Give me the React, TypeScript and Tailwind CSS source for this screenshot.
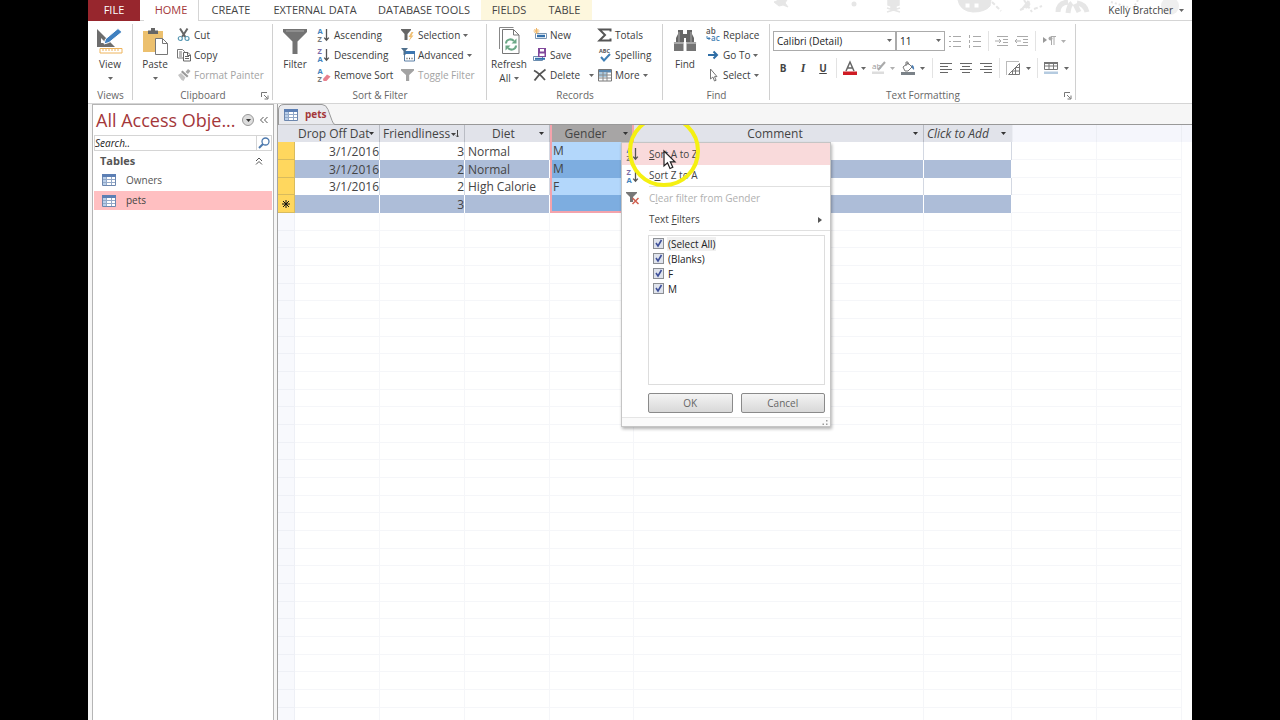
import React from "react";

type Kids = { children?: React.ReactNode };

function Caret({ faded = false, dark = false }: { faded?: boolean; dark?: boolean }) {
  const tone = faded ? "text-[#b0b0b0]" : dark ? "text-[#333]" : "text-[#666]";
  return (
    <svg viewBox="0 0 5 3" className={`h-[3px] w-[5px] shrink-0 ${tone}`}>
      <path d="M0 0h5L2.500 3z" fill="currentColor" />
    </svg>
  );
}

function Icon({ children, size = "sm" }: Kids & { size?: "sm" | "lg" }) {
  return size === "sm" ? (
    <svg viewBox="0 0 14 14" className="h-[14px] w-[14px] shrink-0 overflow-visible" fill="none">
      {children}
    </svg>
  ) : (
    <svg viewBox="0 0 28 28" className="h-7 w-7 shrink-0" fill="none">
      {children}
    </svg>
  );
}

function SortLetters({ top, bottom, eraser = false }: { top: string; bottom: string; eraser?: boolean }) {
  return (
    <Icon>
      <text x="0.500" y="6" fontSize="7.500" fontFamily="Open Sans, sans-serif" fontWeight="700" fill={top === "A" ? "#3f84bd" : "#7b6aa8"}>{top}</text>
      <text x="0.500" y="14" fontSize="7.500" fontFamily="Open Sans, sans-serif" fontWeight="700" fill={bottom === "A" ? "#3f84bd" : "#777"}>{bottom}</text>
      {eraser ? (
        <path d="M6 11l4-4.500 3.500 2-4 4.500H6.500z" fill="#e8808e" />
      ) : (
        <path d="M9.500 1v11M7.200 9.600l2.300 2.600 2.300-2.600" stroke="#555" strokeWidth="1.300" />
      )}
    </Icon>
  );
}

const icons = {
  cut: (
    <Icon>
      <path d="M3 0.500l5.400 8.500M10.500 0.500L5 9" stroke="#666" strokeWidth="2" />
      <circle cx="3.300" cy="10.500" r="2" stroke="#5b9bb5" strokeWidth="1.200" />
      <circle cx="10" cy="10.500" r="2" stroke="#5b9bb5" strokeWidth="1.200" />
    </Icon>
  ),
  copy: (
    <Icon>
      <path d="M.5 1.500h5l2 2v6.500h-7z" fill="#fff" stroke="#777" />
      <path d="M2 4h3M2 6h3M2 8h3" stroke="#777" />
      <path d="M6.500 4.500h4.500l2.500 2.500v6h-7z" fill="#fff" stroke="#666" />
      <path d="M8 8.500h4M8 10.500h4M10.500 4.500v3h3" stroke="#666" />
    </Icon>
  ),
  painter: (
    <Icon>
      <path d="M8.500 4L11 1l2.500 2-2.500 3z" fill="#a8a8a8" />
      <path d="M5.500 2.500l6 5.500-1.500 1.500-6-5.500z" fill="#999" />
      <path d="M1 7l3-2 4.500 4.500-2 3.500-2-1z" fill="#c4c4c4" />
    </Icon>
  ),
  selection: (
    <Icon>
      <path d="M0 1h10v1L6.500 6v6h-3V6L0 2z" fill="#666" />
      <path d="M10.500 4L7.500 9h2l-2 4.500 5-6h-2l2-3.500z" fill="#f0bf72" />
    </Icon>
  ),
  advanced: (
    <Icon>
      <path d="M3.500 3.500h10v9.500h-10z" fill="#fff" stroke="#5a7fa5" />
      <path d="M3 3h11v3H3z" fill="#3c76b0" />
      <path d="M5.500 10.500h6" stroke="#555" strokeDasharray="1 1.500" strokeWidth="1.500" />
      <path d="M0 0h7L4.500 3v4h-2V3z" fill="#50708c" />
    </Icon>
  ),
  toggle: (
    <Icon>
      <path d="M0 1h13v1.500L8.200 7v6H5V7L0 2.500z" fill="#a3a3a3" />
    </Icon>
  ),
  fresh: (
    <Icon>
      <path d="M2.500 5.500h11v5h-11z" fill="#fff" stroke="#7a95b0" />
      <path d="M4 8h8" stroke="#3270ad" strokeWidth="2.500" />
      <path d="M3.500 0v6M.5 3h6M1.400 1l4 4M5.400 1l-4 4" stroke="#efb76a" />
    </Icon>
  ),
  save: (
    <Icon>
      <path d="M.5 8.500h9v4h-9z" fill="#fff" stroke="#6c8eb0" />
      <path d="M2 10.800h10" stroke="#3270ad" strokeWidth="2" />
      <path d="M5 0h8v9H5z" fill="#80479b" />
      <path d="M7 1h4v2.500H7zM6.500 5.500h5V8h-5z" fill="#fff" />
    </Icon>
  ),
  del: (
    <Icon>
      <path d="M1 2.500c4 2 8 6 11 9.500M12.500 1.500C8 4.500 4.500 8 1.500 12.500" stroke="#555" strokeWidth="1.800" />
    </Icon>
  ),
  totals: (
    <Icon>
      <path d="M12.500 3.500V1.500H1.500L7 7l-5.500 5.500h11v-2" stroke="#555" strokeWidth="2" />
    </Icon>
  ),
  spelling: (
    <Icon>
      <text x="1" y="5" fontSize="5.500" fontFamily="Open Sans, sans-serif" fontWeight="700" fill="#555">ABC</text>
      <path d="M3 9l3 3.500L12 6" stroke="#3f7fb5" strokeWidth="2" />
    </Icon>
  ),
  more: (
    <Icon>
      <path d="M.5 1.500h13v11.500H.5z" fill="#fff" stroke="#777" />
      <path d="M1 2h12v2.500H1z" fill="#5a88b0" />
      <path d="M1 5h8v4H1z" fill="#a9cce4" />
      <path d="M1 7h12M1 10h12M5 4v9M9 4v9" stroke="#888" />
    </Icon>
  ),
  replace: (
    <Icon>
      <text x="0" y="6" fontSize="8" fontFamily="Open Sans, sans-serif" fontWeight="600" fill="#555">ab</text>
      <text x="5" y="13" fontSize="8" fontFamily="Open Sans, sans-serif" fontWeight="600" fill="#3f7fb5">ac</text>
      <path d="M1 8v2.500h3M2.500 9l1.500 1.500L2.500 12" stroke="#3f7fb5" />
    </Icon>
  ),
  goto: (
    <Icon>
      <path d="M2 7h9M7.500 3.500L11 7l-3.500 3.500" stroke="#2f6ea6" strokeWidth="2" />
    </Icon>
  ),
  pick: (
    <Icon>
      <path d="M4.500 1v10l2.400-2 1.600 4 1.600-.700-1.600-3.700H11z" fill="#fff" stroke="#777" />
    </Icon>
  ),
};

function Small({ icon, children, caret = false, faded = false, gap = false }: Kids & { icon: React.ReactNode; caret?: boolean; faded?: boolean; gap?: boolean }) {
  return (
    <button type="button" className={`flex h-5 items-center gap-[3px] whitespace-nowrap ${faded ? "text-[#a3a3a3]" : "text-[#3c3c3c]"}`}>
      {icon}
      <span>{children}</span>
      {caret && <span className={gap ? "pl-[6px]" : ""}><Caret /></span>}
    </button>
  );
}

function Big({ icon, label, second, caret = false }: { icon: React.ReactNode; label: string; second?: string; caret?: boolean }) {
  return (
    <button type="button" className="flex w-9 shrink-0 flex-col items-center pt-[2px] text-[#3c3c3c]">
      {icon}
      <span className="mt-[2px] h-[14px] leading-[14px]">{label}</span>
      <span className="flex h-[14px] items-center gap-[3px] leading-[14px]">
        {second}
        {caret && <Caret />}
      </span>
    </button>
  );
}

function Launcher() {
  return (
    <button type="button" aria-label="More options" className="absolute right-1 top-1 h-2 w-2">
      <svg viewBox="0 0 8 8" className="h-2 w-2" fill="none" stroke="#777">
        <path d="M.5 5V.5H6M3 3l3.500 3.500M7 3.500V7H3.500" />
      </svg>
    </button>
  );
}

function Group({ label, width, launcher = false, children }: Kids & { label: string; width: string; launcher?: boolean }) {
  return (
    <section aria-label={label} className={`relative flex shrink-0 flex-col pt-1 ${width}`}>
      <div className="flex h-[62px] items-start">{children}</div>
      <div className="relative mt-px h-[14px] text-center leading-[14px] text-[#666]">
        {label}
        {launcher && <Launcher />}
      </div>
      <span className="absolute right-0 top-[3px] h-[76px] w-px bg-[#d0d0d0]" />
    </section>
  );
}

function Lines({ kind }: { kind: "left" | "center" | "right" | "bullets" | "numbers" | "indent" | "outdent" }) {
  const paths = {
    left: "M1 2.500h12M1 5.500h8M1 8.500h12M1 11.500h8",
    center: "M1 2.500h12M3 5.500h8M1 8.500h12M3 11.500h8",
    right: "M1 2.500h12M5 5.500h8M1 8.500h12M5 11.500h8",
    bullets: "M5 2.500h8M5 7.500h8M5 12.500h8M1 2.500h2M1 7.500h2M1 12.500h2",
    numbers: "M5 2.500h8M5 7.500h8M5 12.500h8M1.500 1v3M1.500 6v3M1.500 11v3",
    indent: "M2 2.500h11M8 5.500h5M8 8.500h5M2 11.500h11M0 7h6M4 5l2 2-2 2",
    outdent: "M2 2.500h11M8 5.500h5M8 8.500h5M2 11.500h11M6 7H0M2 5L0 7l2 2",
  };
  const dark = kind === "left" || kind === "center" || kind === "right";
  return (
    <button type="button" aria-label={kind} className="flex h-5 w-5 items-center justify-center">
      <Icon>
        <path d={paths[kind]} stroke={dark ? "#666" : "#aaa"} />
      </Icon>
    </button>
  );
}

function Divider() {
  return <span className="mx-[3px] h-5 w-px bg-[#e3e3e3]" />;
}

function Combo({ label, value, width }: { label: string; value: string; width: string }) {
  return (
    <div className={`relative ${width}`}>
      <select aria-label={label} className="h-5 w-full appearance-none border border-[#ababab] bg-white pl-[3px] leading-[18px] text-[#222]">
        <option>{value}</option>
      </select>
      <span className="pointer-events-none absolute right-1 top-2"><Caret /></span>
    </div>
  );
}

function TableIcon() {
  return (
    <svg viewBox="0 0 14 12" className="h-3 w-[14px] shrink-0" fill="none">
      <path d="M.5.5h13v11H.5z" fill="#fff" stroke="#6d87ae" />
      <path d="M0 0h14v3H0z" fill="#5c7fb4" />
      <path d="M1 3h3v8H1z" fill="#b9cfea" />
      <path d="M1 5.500h12M1 8.500h12M4.500 3v8M9.500 3v8" stroke="#93a9c8" />
    </svg>
  );
}

function Ribbon() {
  return (
    <div className="flex h-[83px] shrink-0 overflow-hidden border-b border-[#d5d5d5] bg-white">
      <Group label="Views" width="w-[45px]">
        <div className="pl-1">
          <Big
            label="View"
            caret
            icon={
              <Icon size="lg">
                <path d="M1 2v18h18z" fill="#6d6d6d" />
                <path d="M5 11v5h5z" fill="#fff" />
                <path d="M8 17l1.500-5L22 1.500l4 3.500L13 15.500z" fill="#3f80c0" stroke="#fff" />
                <path d="M4 21.500h22v4.500H4z" fill="#fff" stroke="#eeb45c" />
                <path d="M7 22v2M10 22v2M13 22v2M16 22v2M19 22v2M22 22v2" stroke="#eeb45c" />
              </Icon>
            }
          />
        </div>
      </Group>
      <Group label="Clipboard" width="w-[140px]" launcher>
        <div className="pl-1">
          <Big
            label="Paste"
            caret
            icon={
              <Icon size="lg">
                <path d="M2 4h20v21H2z" fill="#ecc06e" />
                <path d="M7 7V3.500h3V1h4v2.500h3V7z" fill="#666" />
                <path d="M14.500 11.500h7l5 5v11h-12z" fill="#fff" stroke="#777" />
                <path d="M21.500 11.500v5h5" stroke="#777" />
              </Icon>
            }
          />
        </div>
        <div className="pl-1">
          <Small icon={icons.cut}>Cut</Small>
          <Small icon={icons.copy}>Copy</Small>
          <Small icon={icons.painter} faded>Format Painter</Small>
        </div>
      </Group>
      <Group label="Sort & Filter" width="w-[214px]">
        <div className="pl-1">
          <Big
            label="Filter"
            icon={
              <Icon size="lg">
                <path d="M2 2h24v3l-9.500 9.500V27h-5V14.500L2 5z" fill="#737373" />
                <path d="M5 4h18" stroke="#aaa" />
              </Icon>
            }
          />
        </div>
        <div className="w-[88px] shrink-0 pl-1">
          <Small icon={<SortLetters top="A" bottom="Z" />}>Ascending</Small>
          <Small icon={<SortLetters top="Z" bottom="A" />}>Descending</Small>
          <Small icon={<SortLetters top="A" bottom="Z" eraser />}>Remove Sort</Small>
        </div>
        <div>
          <Small icon={icons.selection} caret>Selection</Small>
          <Small icon={icons.advanced} caret>Advanced</Small>
          <Small icon={icons.toggle} faded>Toggle Filter</Small>
        </div>
      </Group>
      <Group label="Records" width="w-[176px]">
        <div className="pl-1">
          <Big
            label="Refresh"
            second="All"
            caret
            icon={
              <Icon size="lg">
                <path d="M4.500 22V.5h14" stroke="#888" />
                <path d="M7.500 2.500h11l5.500 5.500v18.500H7.500z" fill="#fff" stroke="#777" />
                <path d="M18.500 2.500V8h5.500" stroke="#777" />
                <path d="M11 16.500c0-4 5-5.500 8-2.500M21 18.500c0 4-5 5.500-8 2.500" stroke="#6ba886" strokeWidth="2" />
                <path d="M21.500 11.500v5h-5zM10.500 23.500v-5h5z" fill="#6ba886" />
              </Icon>
            }
          />
        </div>
        <div className="w-[71px] shrink-0 pl-[6px]">
          <Small icon={icons.fresh}>New</Small>
          <Small icon={icons.save}>Save</Small>
          <Small icon={icons.del} caret gap>Delete</Small>
        </div>
        <div>
          <Small icon={icons.totals}>Totals</Small>
          <Small icon={icons.spelling}>Spelling</Small>
          <Small icon={icons.more} caret>More</Small>
        </div>
      </Group>
      <Group label="Find" width="w-[107px]">
        <div className="pl-1">
          <Big
            label="Find"
            icon={
              <Icon size="lg">
                <path d="M7 3h5v4h4V3h5v4l2 4v4h-8v-4h-2v4H5v-4l2-4z" fill="#666" />
                <path d="M3 15h9.500v9H3zM15.500 15H25v9h-9.500z" fill="#747474" />
                <path d="M8 5v10M20 5v10" stroke="#aaa" />
                <path d="M2.500 16h10M15.500 16h10" stroke="#ddd" />
              </Icon>
            }
          />
        </div>
        <div className="pl-[3px]">
          <Small icon={icons.replace}>Replace</Small>
          <Small icon={icons.goto} caret>Go To</Small>
          <Small icon={icons.pick} caret>Select</Small>
        </div>
      </Group>
      <Group label="Text Formatting" width="w-[306px]" launcher>
        <div className="flex flex-col gap-[7px] pl-[3px] pt-[6px]">
          <div className="flex items-center">
            <Combo label="Font" value="Calibri (Detail)" width="w-[123px]" />
            <Combo label="Font size" value="11" width="w-[49px]" />
            <Lines kind="bullets" />
            <Lines kind="numbers" />
            <Divider />
            <Lines kind="indent" />
            <Lines kind="outdent" />
            <Divider />
            <button type="button" aria-label="Text direction" className="flex h-5 items-center gap-[5px] pl-[3px]">
              <Icon>
                <path d="M1 3v6l4-3z" fill="#999" />
                <path d="M9 2.500h5M9.500 2v9M12 2v9" stroke="#aaa" />
                <circle cx="8.500" cy="4.500" r="2" fill="#aaa" />
              </Icon>
              <Caret faded />
            </button>
          </div>
          <div className="flex items-center">
            <button type="button" className="h-5 w-5 font-bold text-[#444]">B</button>
            <button type="button" className="h-5 w-5 font-['Liberation_Serif',serif] text-[12px] font-bold italic text-[#444]">I</button>
            <button type="button" className="h-5 w-5 font-bold text-[#444] underline">U</button>
            <Divider />
            <button type="button" aria-label="Font colour" className="flex h-5 items-center gap-1 px-[3px]">
              <Icon>
                <path d="M3 10L7 1l4 9M4.500 7h5" stroke="#666" strokeWidth="1.500" />
                <path d="M0 10.500h14v3.500H0z" fill="#cf1b24" />
              </Icon>
              <Caret />
            </button>
            <button type="button" aria-label="Highlight" className="flex h-5 items-center gap-1 px-[3px]">
              <Icon>
                <text x="0" y="8" fontSize="8" fontFamily="Open Sans, sans-serif" fill="#999">ab</text>
                <path d="M6 9l7-8" stroke="#aaa" strokeWidth="2" />
                <path d="M0 10.500h12V13H0z" fill="#ddd" />
              </Icon>
              <Caret faded />
            </button>
            <button type="button" aria-label="Background colour" className="flex h-5 items-center gap-[5px] pl-[3px] pr-1">
              <Icon>
                <path d="M2 6l5-4 4 4-4 4H4z" fill="#fff" stroke="#777" />
                <path d="M5 5V1h2v3" stroke="#777" />
                <path d="M10.500 4c2 0 3 2 2.500 5l-2-2z" fill="#4c7fb5" />
                <path d="M0 11h14v3H0z" fill="#7b8288" />
              </Icon>
              <Caret />
            </button>
            <Divider />
            <Lines kind="left" />
            <Lines kind="center" />
            <Lines kind="right" />
            <Divider />
            <button type="button" aria-label="Gridlines" className="flex h-5 items-center gap-[6px] px-[3px]">
              <Icon>
                <path d="M.5 13.500V.5h13" stroke="#777" strokeDasharray="1 1" />
                <path d="M2.500 13.500h11V2.500zM13 6.500H9M13 10H6M9.500 6v7M6.500 9.500v4" stroke="#777" />
              </Icon>
              <Caret />
            </button>
            <Divider />
            <button type="button" aria-label="Alternate row colour" className="flex h-5 items-center gap-[6px] pl-[3px]">
              <Icon>
                <path d="M.5 1.500h13v7H.5zM0 5h14M5 1v8M9.500 1v8" stroke="#777" />
                <path d="M0 1h14v2H0z" fill="#777" />
                <path d="M0 10.500h14V13H0z" fill="#b5cbe0" />
              </Icon>
              <Caret />
            </button>
          </div>
        </div>
      </Group>
    </div>
  );
}

function TabBar() {
  const tab = "flex h-full items-center justify-center whitespace-nowrap border-b border-[#d5d5d5]";
  return (
    <nav className="relative flex h-[21px] shrink-0 text-[11px] text-[#444]">
      <a href="#file" className="flex w-[52px] items-center justify-center bg-[#97262d] text-white">FILE</a>
      <span className="w-1 border-b border-[#d5d5d5]" />
      <a href="#home" className="flex w-[55px] items-center justify-center border-r border-[#d5d5d5] text-[#a4373a]">HOME</a>
      <a href="#create" className={`w-[64px] ${tab}`}>CREATE</a>
      <a href="#external" className={`w-[104px] ${tab}`}>EXTERNAL DATA</a>
      <a href="#tools" className={`w-[114px] ${tab}`}>DATABASE TOOLS</a>
      <a href="#fields" className={`w-[56px] bg-[#fdf7dd] ${tab}`}>FIELDS</a>
      <a href="#table" className={`w-[55px] bg-[#fdf7dd] ${tab}`}>TABLE</a>
      <div className="relative flex flex-1 items-center justify-end border-b border-[#d5d5d5] pr-2">
        <svg viewBox="0 0 430 16" className="absolute right-0 top-0 h-4 w-[430px]" fill="#e6e6e6" stroke="#e6e6e6">
          <path d="M12 2l5-2h8l-2 3 3 4-5-2-4 1z" />
          <circle cx="92" cy="4" r="2.500" stroke="none" />
          <path d="M126 0h11v5l-3 1v4h-5V6l-3-1zM125 8l13 4M138 8l-13 4" strokeWidth="1.500" />
          <path d="M196 0h33l-1 6q-5 6-17 6-13-1-15-12z" />
          <path d="M203 3h5v5h-5zM212 3h5v5h-5z" fill="#fff" />
          <path d="M230 2l9 9M258 10l10-4-2-6M272 9l8-3M262 0l8 12" strokeWidth="2" strokeDasharray="4 2" />
          <path d="M296 12q0-9 10-10M306 13q1-8 4-10M325 12q-2-8-10-9M317 12l-4-8" strokeWidth="5" fill="none" />
          <path d="M349 2l20 6M376 0l-6 10" strokeWidth="2" strokeDasharray="2 2" />
          <circle cx="408" cy="6" r="9" stroke="none" fill="#efefef" />
        </svg>
        <button type="button" className="relative flex items-center gap-[6px] text-[10px]">
          Kelly Bratcher <Caret />
        </button>
      </div>
    </nav>
  );
}

function NavPane() {
  return (
    <aside className="ml-1 flex w-[182px] shrink-0 flex-col border-x border-t border-[#b5b5b5] bg-white">
      <div className="flex h-[30px] items-center pl-[3px] pr-[3px]">
        <h1 className="min-w-0 flex-1 whitespace-nowrap text-[18px] leading-[28px] text-[#a4373a]">All Access Obje...</h1>
        <button type="button" aria-label="Choose objects" className="flex h-3 w-3 shrink-0 items-center justify-center rounded-full border border-[#999] bg-[#ddd]"><Caret dark /></button>
        <button type="button" aria-label="Collapse pane" className="ml-1 flex h-3 w-3 shrink-0 items-center justify-center">
          <svg viewBox="0 0 8 8" className="h-2 w-2" fill="none" stroke="#555"><path d="M3.500 1l-3 3 3 3M7.500 1l-3 3 3 3" /></svg>
        </button>
      </div>
      <label className="mx-px flex h-4 items-center border border-[#d5d5d5]">
        <input aria-label="Search" placeholder="Search.." className="h-[14px] min-w-0 flex-1 border-r border-[#d5d5d5] text-[10px] italic outline-none placeholder:text-[#222]" />
        <svg viewBox="0 0 14 14" className="h-[14px] w-[14px]" fill="none" stroke="#4d79ad">
          <circle cx="8.500" cy="5.500" r="3.500" strokeWidth="1.300" />
          <path d="M6 8l-4 4" strokeWidth="2" />
        </svg>
      </label>
      <div className="flex h-5 items-center justify-between pl-[7px] pr-[10px]">
        <h2 className="text-[11px] font-bold text-[#555]">Tables</h2>
        <svg viewBox="0 0 8 8" className="h-2 w-2" fill="none" stroke="#555">
          <path d="M1 4l3-3 3 3M1 7.500l3-3 3 3" />
        </svg>
      </div>
      <ul className="flex flex-col gap-[2px] text-[#555]">
        <li><a href="#owners" className="mx-px flex h-[18px] items-center gap-[10px] pl-2"><TableIcon />Owners</a></li>
        <li><a href="#pets" className="mx-px flex h-[19px] items-center gap-[10px] bg-[#ffbfc1] pl-2 text-[#444]"><TableIcon />pets</a></li>
      </ul>
    </aside>
  );
}

const options = ["(Select All)", "(Blanks)", "F", "M"];

function FilterMenu() {
  return (
    <div role="menu" className="absolute left-[69px] top-full z-10 w-[210px] border border-[#c5c5c5] bg-white text-left text-[10px] font-normal text-[#444] shadow-[1px_2px_3px_rgba(0,0,0,0.3)]">
      <button type="button" role="menuitem" className="flex h-[22px] w-full items-center gap-[9px] bg-[#f9dadb] pl-[4px]">
        <SortLetters top="A" bottom="Z" />
        <span><u>S</u>ort A to Z</span>
      </button>
      <button type="button" role="menuitem" className="flex h-[21px] w-full items-center gap-[9px] pl-[4px]">
        <SortLetters top="Z" bottom="A" />
        <span>S<u>o</u>rt Z to A</span>
      </button>
      <hr className="ml-[27px] border-[#e0e0e0]" />
      <button type="button" role="menuitem" className="flex h-[22px] w-full items-center gap-[9px] pl-[4px] text-[#b0b0b0]">
        <Icon>
          <path d="M0 1h11v1L7 6v5H4V6L0 2z" fill="#777" />
          <path d="M6.500 7l6 6M12.500 7l-6 6" stroke="#d0604f" strokeWidth="1.500" />
        </Icon>
        <span>C<u>l</u>ear filter from Gender</span>
      </button>
      <button type="button" role="menuitem" className="flex h-[21px] w-full items-center justify-between pl-[27px] pr-2">
        <span>Text <u>F</u>ilters</span>
        <svg viewBox="0 0 4 6" className="h-[6px] w-1"><path d="M0 0l4 3-4 3z" fill="#555" /></svg>
      </button>
      <hr className="ml-[27px] border-[#e0e0e0]" />
      <div className="ml-[26px] mr-[5px] mt-1 h-[150px] border border-[#ddd] pl-[4px] text-[#222]">
        {options.map((name, index) => (
          <label key={name} className="flex h-[15px] items-center gap-[3px]">
            <span className="relative flex h-[11px] w-[11px]">
              <input type="checkbox" defaultChecked className="peer h-[11px] w-[11px] appearance-none border border-[#8c8f94] bg-[#dfe3ec]" />
              <svg viewBox="0 0 11 11" className="pointer-events-none absolute inset-0 hidden peer-checked:block" fill="none">
                <path d="M3 5l2 3 3.500-6" stroke="#3d4f9a" strokeWidth="1.600" />
              </svg>
            </span>
            <span className={index === 0 ? "bg-[#f0f0f0] px-px leading-[14px]" : "px-px leading-[14px]"}>{name}</span>
          </label>
        ))}
      </div>
      <div className="ml-[26px] mr-[5px] mt-2 grid grid-cols-2 gap-2 pb-1">
        <button type="button" className="h-5 rounded-[2px] border border-[#8a8a8a] bg-linear-to-b from-[#f4f4f4] to-[#d8d8d8] text-[#666]">OK</button>
        <button type="button" className="h-5 rounded-[2px] border border-[#8a8a8a] bg-linear-to-b from-[#f4f4f4] to-[#d8d8d8] text-[#666]">Cancel</button>
      </div>
      <div className="flex h-[9px] items-center justify-end border-t border-[#e5e5e5] bg-[#fafafa] pr-[2px]">
        <svg viewBox="0 0 7 7" className="h-[7px] w-[7px]" fill="#999"><path d="M5 1h1.500v1.500H5zM5 4.500h1.500V6H5zM1.500 4.500H3V6H1.500z" /></svg>
      </div>
    </div>
  );
}

function Pointer() {
  return (
    <svg viewBox="0 0 76 76" className="pointer-events-none absolute left-[74px] top-[-12px] z-20 h-[76px] w-[76px]" fill="none">
      <circle cx="38" cy="38" r="34" stroke="#f5f011" strokeWidth="4" />
      <path d="M38 38v15l3.500-3.200 2.500 5.700 2.800-1.200-2.500-5.500H49z" fill="#fff" stroke="#222" strokeWidth="1.200" />
    </svg>
  );
}

type Row = [string, string, string, string];
const rows: Row[] = [
  ["3/1/2016", "3", "Normal", "M"],
  ["3/1/2016", "2", "Normal", "M"],
  ["3/1/2016", "2", "High Calorie", "F"],
  ["", "3", "", ""],
];

function HeadCell({ label, sorted = false, align = "center" }: { label: string; sorted?: boolean; align?: "left" | "center" }) {
  return (
    <th scope="col" className="border-r border-[#b9bcc4] bg-[#e1e3ea] p-0 font-normal">
      <div className="flex h-[17px] items-center pl-[3px] pr-[5px]">
        <span className={`min-w-0 flex-1 whitespace-nowrap leading-[17px] ${align === "left" ? "text-left" : "text-center"}`}>{label}</span>
        {sorted ? (
          <svg viewBox="0 0 8 8" className="h-2 w-2 shrink-0" fill="none"><path d="M0 3h5L2.500 6z" fill="#444" /><path d="M6.500 0v7M5 5.500L6.500 7 8 5.500" stroke="#444" /></svg>
        ) : (
          <Caret dark />
        )}
      </div>
    </th>
  );
}

function DataGrid() {
  const blanks = Array.from({ length: 29 }, (_, i) => i);
  return (
    <table className="w-full table-fixed border-separate border-spacing-0 text-[12px] text-[#444]">
      <colgroup>
        <col className="w-[17px]" />
        <col className="w-[85px]" />
        <col className="w-[85px]" />
        <col className="w-[85px]" />
        <col className="w-[84px]" />
        <col className="w-[290px]" />
        <col className="w-[88px]" />
        <col className="w-[85px]" />
        <col className="w-[85px]" />
        <col />
      </colgroup>
      <thead>
        <tr className="h-[17px]">
          <th className="bg-[#e1e3ea] p-0" />
          <HeadCell label="Drop Off Dat" align="left" />
          <HeadCell label="Friendliness" align="left" sorted />
          <HeadCell label="Diet" />
          <th scope="col" className="relative border-x-2 border-[#f4a3ac] bg-[#a7a5a5] p-0 font-normal">
            <div className="flex h-[17px] items-center pr-1">
              <span className="flex-1 pr-1 text-center leading-[17px]">Gender</span>
              <Caret dark />
            </div>
            <FilterMenu />
            <Pointer />
          </th>
          <HeadCell label="Comment" />
          <th scope="col" className="bg-[#e1e3ea] p-0 font-normal">
            <div className="flex h-[17px] items-center justify-between pl-[3px] pr-[6px] italic leading-[17px]">Click to Add <Caret dark /></div>
          </th>
          <th className="border-x border-[#eceef4] bg-[#f5f6fc] p-0" />
          <th className="border-r border-[#eceef4] bg-[#f5f6fc] p-0" />
          <th className="bg-[#f5f6fc] p-0" />
        </tr>
      </thead>
      <tbody>
        {rows.map((row, i) => {
          const shade = i % 2 === 1;
          const cell = shade ? "border-r border-white bg-[#adbdd8] p-0" : "border-r border-[#d3d8e2] bg-white p-0";
          const last = i === rows.length - 1;
          const faint = "border-b border-r border-[#f5f6f9] p-0";
          return (
            <tr key={i} className={i === 2 ? "h-[17px]" : "h-[18px]"}>
              <td className="border-b border-r border-[#d8bb5e] bg-[#ffd75e] p-0 text-center text-[12px] leading-[16px] text-black">
                {last && (
                  <svg viewBox="0 0 8 8" className="mx-auto h-2 w-2" stroke="#111"><path d="M4 0v8M0 4h8M1 1l6 6M7 1L1 7" /></svg>
                )}
              </td>
              <td className={`text-right leading-[17px] ${cell}`}>{row[0]}</td>
              <td className={`text-right leading-[17px] ${cell}`}>{row[1]}</td>
              <td className={`${cell} leading-[17px]`}><span className="pl-[3px]">{row[2]}</span></td>
              <td className={`border-l-2 border-[#f4a3ac] p-0 leading-[16px] ${shade ? "bg-[#7dade0]" : "bg-[#b3d7fb]"} ${last ? "border-b-2" : ""}`}>
                <span className="pl-px">{row[3]}</span>
              </td>
              <td className={cell} />
              <td className={cell} />
              <td className={faint} />
              <td className={faint} />
              <td className="p-0" />
            </tr>
          );
        })}
        {blanks.map((i) => (
          <tr key={i} className={i % 3 === 1 ? "h-[17px]" : "h-[18px]"}>
            <td className="border-b border-r border-[#eef0f6] bg-[#f8f9fd] p-0" />
            {Array.from({ length: 8 }, (_, c) => (
              <td key={c} className="border-b border-r border-[#f5f6f9] p-0" />
            ))}
            <td className="p-0" />
          </tr>
        ))}
      </tbody>
    </table>
  );
}

export default function App() {
  return (
    <div className="h-screen overflow-hidden bg-black px-[88px] font-['Open_Sans',sans-serif] text-[10px]">
      <div className="flex h-full flex-col bg-white">
        <TabBar />
        <Ribbon />
        <div className="flex min-h-0 flex-1 bg-[#f6f6f6]">
          <NavPane />
          <main className="ml-[3px] flex min-w-0 flex-1 flex-col border-l border-[#a5a5a5]">
            <div className="h-[21px] shrink-0 border-b border-[#999]">
              <button type="button" className="relative flex h-[21px] w-[58px] items-center gap-[7px] pl-[6px] font-bold text-[#a4373a]">
                <svg viewBox="0 0 58 21" className="absolute inset-0 h-full w-full" fill="none">
                  <path d="M.5 21V6Q.5.5 6 .5h38q4 0 6 5l4 11q1 4 4 4.500z" fill="#e9eaee" stroke="#999" />
                </svg>
                <span className="relative"><TableIcon /></span>
                <span className="relative">pets</span>
              </button>
            </div>
            <div className="min-h-0 flex-1 overflow-hidden bg-white">
              <DataGrid />
            </div>
          </main>
        </div>
      </div>
    </div>
  );
}
